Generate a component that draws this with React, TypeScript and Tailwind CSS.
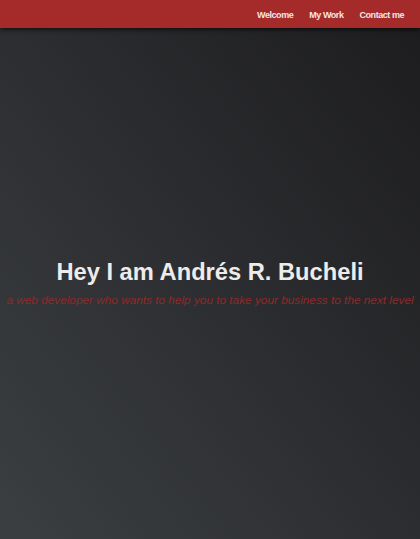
export default function App() {
  return (
    <div
      className="flex h-[539px] w-full flex-col font-['Liberation_Sans',Arial,sans-serif]"
      style={{ background: "linear-gradient(to top right, #3b3f42 0%, #2c2d30 50%, #1c1c1e 100%)" }}
    >
      <header className="z-10 flex h-[28px] shrink-0 items-center justify-end bg-[#a52a2a] pt-[3px] pr-[16px] shadow-[0_2px_4px_rgba(0,0,0,0.6)]">
        <nav className="flex items-center gap-[16px] text-[9px] font-bold tracking-[-0.45px] text-[#f3e6e6]">
          <a className="cursor-pointer">Welcome</a>
          <a className="cursor-pointer">My Work</a>
          <a className="cursor-pointer">Contact me</a>
        </nav>
      </header>
      <main className="flex flex-1 flex-col items-center justify-center pb-[2px] text-center">
        <h1 className="text-[23.7px] leading-[28px] font-bold text-[#ececec]">Hey I am Andrés R. Bucheli</h1>
        <p className="mt-[7px] text-[11.8px] leading-[14px] italic text-[#8e2a2a]">
          a web developer who wants to help you to take your business to the next level
        </p>
      </main>
    </div>
  );
}
